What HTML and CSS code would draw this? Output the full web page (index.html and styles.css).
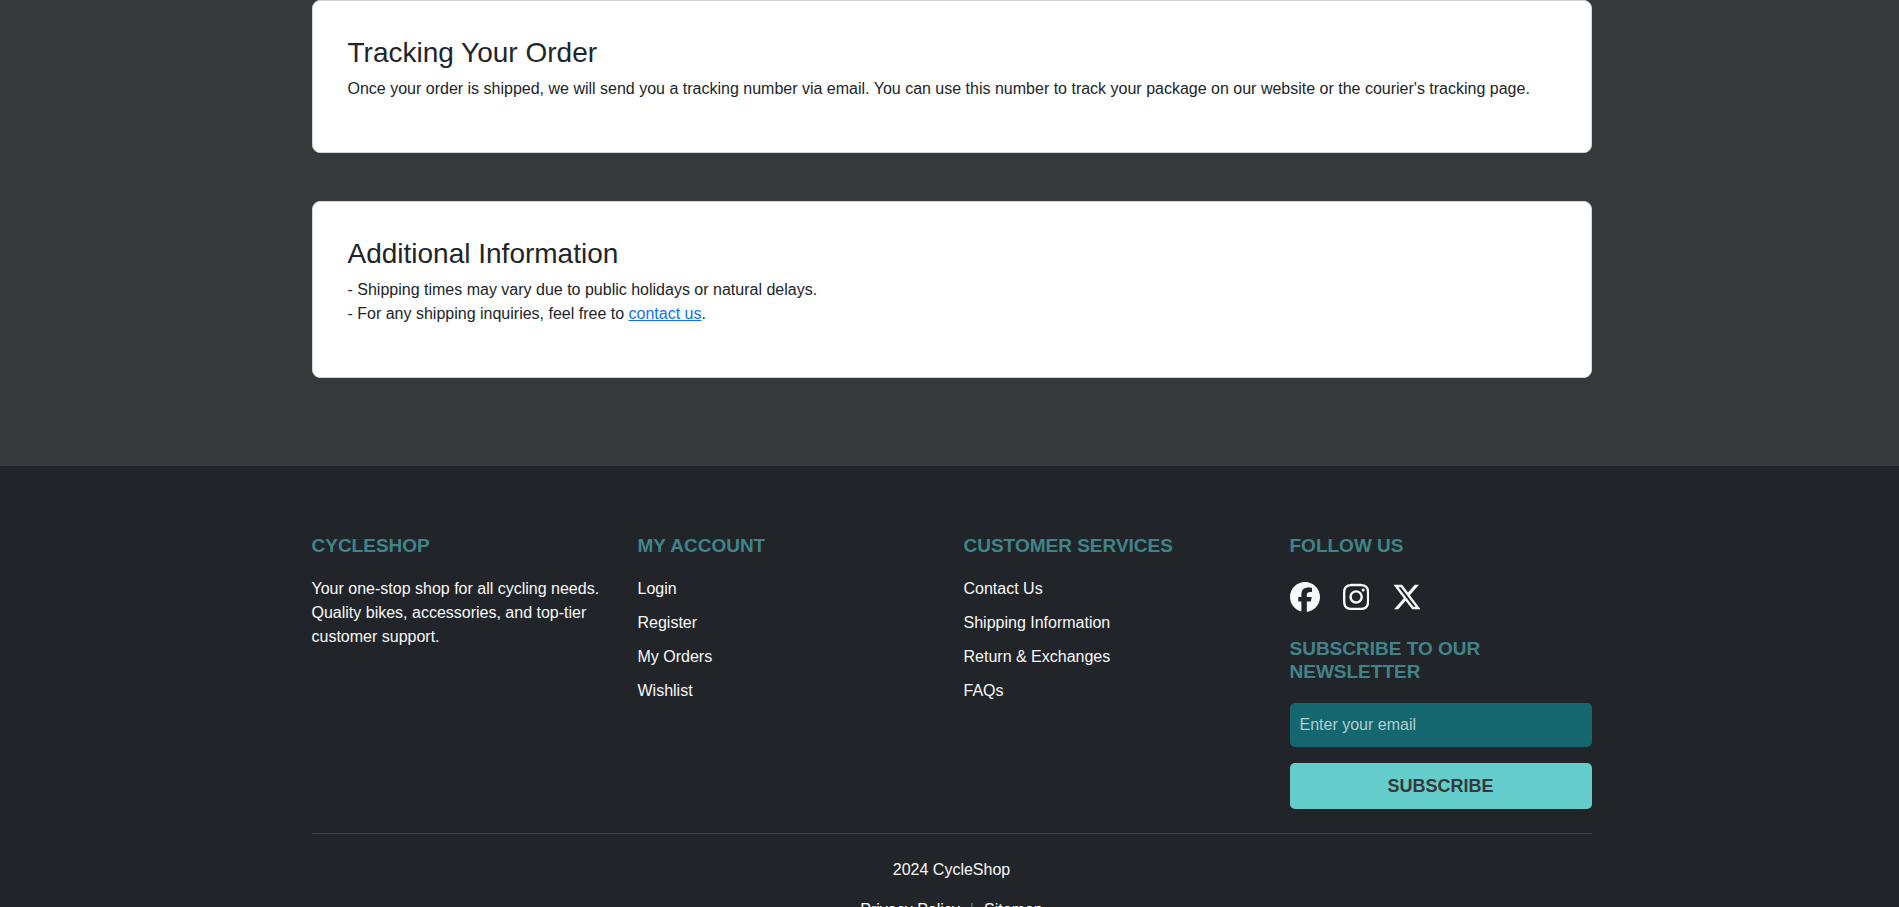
FILE: index.html
```html
<!DOCTYPE html>
<html lang="en">
<head>
<meta charset="utf-8">
<meta name="viewport" content="width=device-width, initial-scale=1">
<title>CycleShop - Shipping Information</title>
<link rel="stylesheet" href="styles.css">
</head>
<body>
<main class="content">
  <div class="container card-list">
    <section class="card">
      <h2 class="card-title">Tracking Your Order</h2>
      <p class="card-text">Once your order is shipped, we will send you a tracking number via email. You can use this number to track your package on our website or the courier's tracking page.</p>
    </section>
    <section class="card">
      <h2 class="card-title">Additional Information</h2>
      <p class="card-text">- Shipping times may vary due to public holidays or natural delays.<br>- For any shipping inquiries, feel free to <a class="inline-link" href="#contact">contact us</a>.</p>
    </section>
  </div>
</main>
<footer class="footer">
  <div class="container">
    <div class="footer-columns">
      <section>
        <h5 class="footer-title">CYCLESHOP</h5>
        <p class="footer-text">Your one-stop shop for all cycling needs. Quality bikes, accessories, and top-tier customer support.</p>
      </section>
      <section>
        <h5 class="footer-title">MY ACCOUNT</h5>
        <ul class="footer-links">
          <li><a href="#login">Login</a></li>
          <li><a href="#register">Register</a></li>
          <li><a href="#orders">My Orders</a></li>
          <li><a href="#wishlist">Wishlist</a></li>
        </ul>
      </section>
      <section>
        <h5 class="footer-title">CUSTOMER SERVICES</h5>
        <ul class="footer-links">
          <li><a href="#contact">Contact Us</a></li>
          <li><a href="#shipping">Shipping Information</a></li>
          <li><a href="#returns">Return &amp; Exchanges</a></li>
          <li><a href="#faqs">FAQs</a></li>
        </ul>
      </section>
      <section>
        <h5 class="footer-title">FOLLOW US</h5>
        <div class="social">
          <a href="#facebook" aria-label="Facebook"><svg class="icon" viewBox="0 0 512 512"><path d="M512 256C512 114.600 397.400 0 256 0S0 114.600 0 256C0 376 82.700 476.800 194.200 504.500V334.200H141.400V256h52.800V222.300c0-87.100 39.400-127.500 125-127.500c16.200 0 44.200 3.200 55.700 6.400V172c-6-.6-16.500-1-29.600-1c-42 0-58.200 15.900-58.200 57.200V256h83.600l-14.400 78.200H287V510.100C413.800 494.800 512 386.900 512 256z"/></svg></a>
          <a href="#instagram" aria-label="Instagram"><svg class="icon" viewBox="0 0 448 512"><path d="M224.100 141c-63.600 0-114.900 51.300-114.900 114.900s51.300 114.900 114.900 114.900S339 319.500 339 255.900 287.700 141 224.100 141zm0 189.600c-41.100 0-74.700-33.500-74.700-74.700s33.500-74.700 74.700-74.700 74.700 33.500 74.700 74.700-33.600 74.700-74.700 74.700zm146.400-194.300c0 14.900-12 26.800-26.800 26.800-14.900 0-26.800-12-26.800-26.800s12-26.800 26.800-26.800 26.800 12 26.800 26.800zm76.100 27.200c-1.700-35.900-9.900-67.700-36.200-93.900-26.200-26.200-58-34.400-93.900-36.200-37-2.100-147.900-2.100-184.900 0-35.800 1.700-67.600 9.900-93.900 36.100s-34.400 58-36.200 93.900c-2.100 37-2.100 147.900 0 184.900 1.700 35.900 9.900 67.700 36.200 93.900s58 34.400 93.900 36.200c37 2.100 147.900 2.100 184.900 0 35.900-1.700 67.700-9.900 93.900-36.200 26.200-26.200 34.400-58 36.200-93.900 2.100-37 2.100-147.800 0-184.800zM398.800 388c-7.800 19.600-22.900 34.700-42.600 42.600-29.500 11.700-99.500 9-132.100 9s-102.700 2.600-132.100-9c-19.600-7.800-34.700-22.900-42.600-42.600-11.700-29.500-9-99.500-9-132.100s-2.600-102.700 9-132.100c7.800-19.600 22.900-34.700 42.600-42.600 29.500-11.700 99.500-9 132.100-9s102.700-2.600 132.100 9c19.600 7.800 34.700 22.900 42.600 42.600 11.700 29.500 9 99.500 9 132.100s2.700 102.700-9 132.100z"/></svg></a>
          <a href="#x" aria-label="X"><svg class="icon" viewBox="0 0 512 512"><path d="M389.200 48h70.600L305.600 224.200 487 464H345L233.700 318.600 106.500 464H35.800L200.700 275.500 26.800 48H172.400L272.900 180.900 389.200 48zM364.400 421.800h39.100L151.100 88h-42L364.400 421.800z"/></svg></a>
        </div>
        <h5 class="footer-title">SUBSCRIBE TO OUR NEWSLETTER</h5>
        <form class="subscribe">
          <input class="email" type="email" placeholder="Enter your email" aria-label="Enter your email">
          <button class="submit" type="button">SUBSCRIBE</button>
        </form>
      </section>
    </div>
    <div class="legal">
      <p>2024 CycleShop</p>
      <nav class="legal-links"><a href="#privacy">Privacy Policy</a><span class="divider">|</span><a href="#sitemap">Sitemap</a></nav>
    </div>
  </div>
</footer>
</body>
</html>
```

FILE: styles.css
```css
* {
  box-sizing: border-box;
}

body {
  margin: 0;
  background: #35393b;
  color: #212529;
  font: 16px/24px "Liberation Sans", Arial, sans-serif;
}

h2,
h5,
p,
ul {
  margin: 0;
  padding: 0;
}

.content,
.footer {
  padding-left: 4px;
}

.content {
  padding-bottom: 88px;
}

.container {
  max-width: 1280px;
  margin: 0 auto;
}

.card-list {
  display: grid;
  gap: 48px;
}

.card {
  padding: 35px 35px 51px;
  background: #fff;
  border: 1px solid #d3d5d5;
  border-radius: 8px;
}

.card-title {
  margin-bottom: 8px;
  font-size: 28px;
  line-height: 33px;
  font-weight: 400;
}

.inline-link {
  color: #0d6efd;
}

.footer {
  padding-top: 68px;
  padding-bottom: 48px;
  background: #212529;
  color: #f8f9fa;
}

.footer a {
  color: inherit;
  text-decoration: none;
}

.footer-columns {
  display: grid;
  grid-template-columns: repeat(4, 1fr);
  gap: 24px;
}

.footer-title {
  margin-bottom: 20px;
  color: #40848a;
  font-size: 19px;
  line-height: 23px;
  font-weight: 700;
}

.footer-links {
  display: grid;
  gap: 10px;
  list-style: none;
}

.social {
  display: flex;
  gap: 23px;
  padding: 5px 0 25px;
}

.icon {
  display: block;
  height: 30px;
  fill: currentColor;
}

.subscribe {
  display: grid;
  gap: 16px;
}

.email,
.submit {
  width: 100%;
  border: 0;
  border-radius: 5px;
  font-family: inherit;
}

.email {
  padding: 10px;
  background: #14666f;
  color: #f8f9fa;
  font-size: 16px;
  line-height: 24px;
}

.email::placeholder {
  color: #b3cdd0;
  opacity: 1;
}

.submit {
  padding: 10px;
  background: #64ccca;
  color: #35393b;
  font-size: 18px;
  line-height: 26px;
  font-weight: 700;
}

.legal {
  margin-top: 24px;
  padding-top: 24px;
  border-top: 1px solid #2f4746;
  text-align: center;
}

.legal-links {
  display: flex;
  justify-content: center;
  gap: 10px;
  margin-top: 16px;
}

.divider {
  color: #40848a;
}
```
